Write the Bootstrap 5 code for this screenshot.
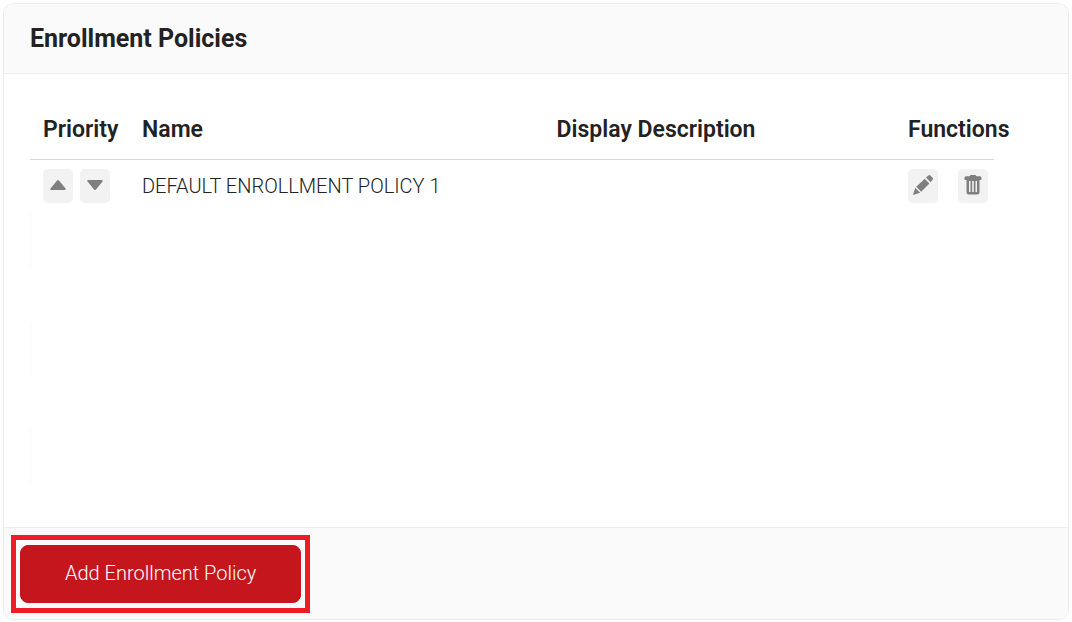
<!DOCTYPE html>
<html lang="en">
<head>
<meta charset="utf-8">
<meta name="viewport" content="width=device-width, initial-scale=1">
<title>Enrollment Policies</title>
<link href="https://cdn.jsdelivr.net/npm/bootstrap@5.3.0/dist/css/bootstrap.min.css" rel="stylesheet">
<style>
body { font-family: Roboto, "Liberation Sans", sans-serif; font-size: 20px; font-weight: 300; line-height: 30px; color: #222; background: #fff; padding: 3px; }
.policy-card { --bs-card-border-color: #ededed; --bs-card-border-radius: 10px; --bs-card-inner-border-radius: 9px; --bs-card-cap-bg: #fafafa; --bs-card-cap-padding-x: 26px; --bs-card-cap-padding-y: 20px; }
.policy-card .card-header { padding-bottom: 19px; }
.policy-title { font-size: 25px; font-weight: 700; line-height: 30px; color: #222; }
.policy-body { padding: 25px 74px 43px 26px; }
.policy-table { --bs-table-color: #222; --bs-table-bg: transparent; table-layout: fixed; }
.policy-table > :not(caption) > * > * { padding: 0 13px; border: 0; }
.policy-table thead th { height: 61px; font-size: 23px; font-weight: 600; white-space: nowrap; vertical-align: middle; }
.policy-table thead tr { box-shadow: inset 0 -1px #d8d8d8; }
.policy-table tbody td { height: 54px; padding-bottom: 2px; }
.policy-table .striped td:first-child { box-shadow: inset 2px 0 #fcfcfc; }
.col-narrow { width: 99px; }
.col-name { width: 43%; }
.icon-btn { width: 30px; height: 34px; padding: 0 0 2px; border: 0; border-radius: 5px; background: #f2f2f2; color: #7f7f7f; flex: none; }
.icon-btn:hover { background: #e6e6e6; color: #666; }
.move-gap { gap: 7px; }
.tool-gap { gap: 20px; }
.policy-card .card-footer { padding: 7px 7px 6px; }
.callout { border: 5px solid #ee1c24; padding: 5px 4px; }
.add-btn { --bs-btn-color: #fff; --bs-btn-bg: #c4161c; --bs-btn-border-color: #c4161c; --bs-btn-hover-color: #fff; --bs-btn-hover-bg: #a91218; --bs-btn-hover-border-color: #a91218; --bs-btn-font-size: 20px; --bs-btn-font-weight: 300; --bs-btn-line-height: 30px; --bs-btn-border-radius: 8px; padding: 12px 44px 14px; }
</style>
</head>
<body>
<main class="card policy-card">
  <div class="card-header">
    <h1 class="policy-title mb-0">Enrollment Policies</h1>
  </div>
  <div class="card-body policy-body">
    <table class="table policy-table align-middle mb-0">
      <colgroup><col class="col-narrow"><col class="col-name"><col><col class="col-narrow"></colgroup>
      <thead>
        <tr><th scope="col">Priority</th><th scope="col">Name</th><th scope="col">Display Description</th><th scope="col">Functions</th></tr>
      </thead>
      <tbody>
        <tr>
          <td>
            <div class="d-flex move-gap">
              <button type="button" class="icon-btn d-flex align-items-center justify-content-center" aria-label="Move up"><svg width="16" height="10" viewBox="0 0 16 10" fill="currentColor"><path d="M7 .5q1-1 2 0l6.500 8q.700 1.500-.700 1.500H1.200Q-.200 10 .500 8.500z"/></svg></button>
              <button type="button" class="icon-btn d-flex align-items-center justify-content-center" aria-label="Move down"><svg width="16" height="10" viewBox="0 0 16 10" fill="currentColor"><path d="M7 9.500q1 1 2 0l6.500-8Q16.200 0 14.800 0H1.200Q-.200 0 .500 1.500z"/></svg></button>
            </div>
          </td>
          <td>DEFAULT ENROLLMENT POLICY 1</td>
          <td></td>
          <td>
            <div class="d-flex tool-gap">
              <button type="button" class="icon-btn d-flex align-items-center justify-content-center" aria-label="Edit"><svg width="22" height="22" viewBox="0 0 22 22" fill="currentColor"><path d="M1 21l2.200-7.200 5 5zM4.200 12.800l8.600-8 4.600 4.600-8.200 8.400zM14 3.600L16.300 1.500q1-1 2 0l2.300 2.300q1 1 0 2L18.600 8.200z"/></svg></button>
              <button type="button" class="icon-btn d-flex align-items-center justify-content-center" aria-label="Delete"><svg width="18" height="20" viewBox="0 0 18 20" fill="currentColor"><path d="M5.500 1.200Q6 0 7.200 0h3.600Q12 0 12.500 1.200H16q1.500 0 1.500 1.500v1.500q0 .800-.800.800H1.300Q.500 5 .500 4.200V2.700Q.500 1.200 2 1.200z"/><path fill-rule="evenodd" d="M2.500 5h13v12q0 2.500-2.500 2.500H5Q2.500 19.500 2.500 17zM5 6v11h1.500V6zm3.200 0v11h1.600V6zm3.300 0v11H13V6z"/></svg></button>
            </div>
          </td>
        </tr>
        <tr class="striped"><td></td><td></td><td></td><td></td></tr>
        <tr><td></td><td></td><td></td><td></td></tr>
        <tr class="striped"><td></td><td></td><td></td><td></td></tr>
        <tr><td></td><td></td><td></td><td></td></tr>
        <tr class="striped"><td></td><td></td><td></td><td></td></tr>
      </tbody>
    </table>
  </div>
  <div class="card-footer d-flex">
    <div class="callout">
      <button type="button" class="btn add-btn">Add Enrollment Policy</button>
    </div>
  </div>
</main>
<script src="https://cdn.jsdelivr.net/npm/bootstrap@5.3.0/dist/js/bootstrap.bundle.min.js"></script>
</body>
</html>
